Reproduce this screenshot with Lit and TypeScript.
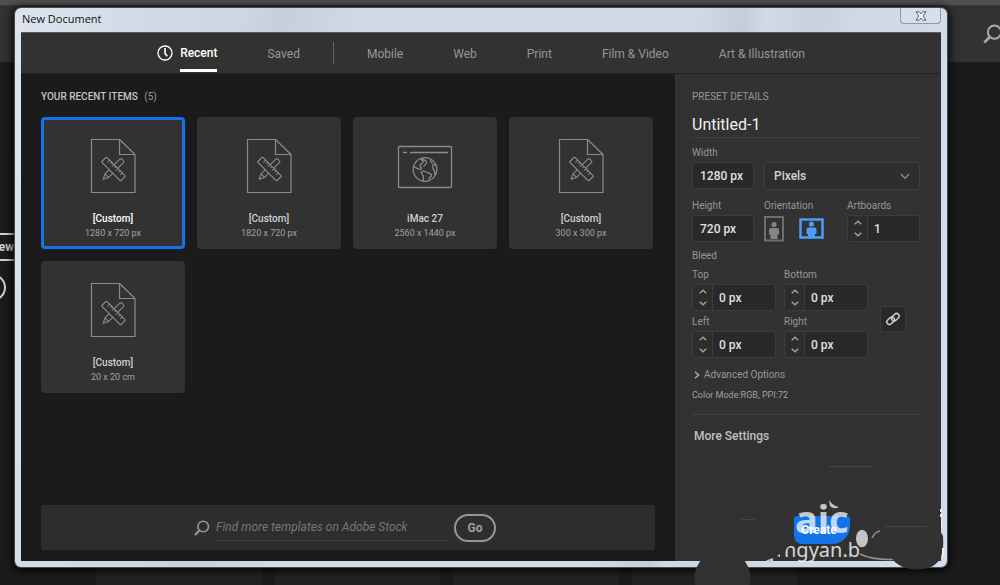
import { LitElement, html, css, svg } from "lit";
import { customElement, property, state } from "lit/decorators.js";

interface Preset {
  name: string;
  size: string;
  kind: "custom" | "web";
}

const PRESETS: Preset[] = [
  { name: "[Custom]", size: "1280 x 720 px", kind: "custom" },
  { name: "[Custom]", size: "1820 x 720 px", kind: "custom" },
  { name: "iMac 27", size: "2560 x 1440 px", kind: "web" },
  { name: "[Custom]", size: "300 x 300 px", kind: "custom" },
  { name: "[Custom]", size: "20 x 20 cm", kind: "custom" },
];

const magnifier = html`<svg width="16" height="16" viewBox="0 0 16 16" fill="none" stroke="currentColor" aria-hidden="true">
  <circle cx="9.2" cy="6.5" r="5.3" stroke-width="1.6"></circle>
  <path d="M5.3 10.4 1 14.9" stroke-width="2.2"></path>
</svg>`;

const documentIcon = html`<svg width="46" height="56" viewBox="0 0 46 56" fill="none" stroke="currentColor" stroke-width="1.2" stroke-linejoin="round" aria-hidden="true">
  <path d="M1.500 1.500H29.500L45 16.500V54.500H1.500Z M29.500 1.500V16.500H45"></path>
  <g transform="translate(23.500 31) rotate(45)">
    <path d="M-2.500 9.500V-11.500q0-1.500 1.500-1.500h2q1.500 0 1.500 1.500V9.500L0 14.500Z M-2.500 9.500h5" stroke-width="1.100"></path>
  </g>
  <g transform="translate(23.500 31) rotate(-45)">
    <rect x="-3.500" y="-13.500" width="7" height="27" rx="1" fill="#323232" stroke-width="1.200"></rect>
    <path d="M3.500-9H.5M3.500-6H1.500M3.500-3H.5M3.500 0H1.500M3.500 3H.5M3.500 6H1.500M3.500 9H.5" stroke-width="1"></path>
  </g>
</svg>`;

const browserIcon = html`<svg width="56" height="56" viewBox="0 0 56 56" fill="none" stroke="currentColor" stroke-width="1.300" stroke-linejoin="round" aria-hidden="true">
  <rect x="1.500" y="8.500" width="53" height="41" rx="1"></rect>
  <path d="M6 14.500h4M13 14.500h38"></path>
  <circle cx="28" cy="31.500" r="11.800"></circle>
  <path d="M24 20.800c0 2 2.500 1.200 2.200 3.200-.3 1.800-3 1.500-3.200 3.500-.2 1.500 2 1.500 1.500 3-.5 1.200-2.500.8-3.500.2-1.500-.8-2.800-1.200-4-2M24 20.800c2.500 1 4.500.8 5.500 3.200.5 1.800-1.500 3-3 4.500M39.500 27.500c-2-1.500-3.500-1-3.800 1-.3 2.500.8 3 1.800 4.500.6 1 .2 2.500 0 4M33.500 21.500c-.5 2 1 3 2.200 4.500M24.500 33.500c2-.8 4-.2 5.500 1 1.500 1 4.800.8 4.500 3-.3 1.500-2.500 2-3 4M24.500 33.500c-1 2 1.200 3 1.800 4.500.5 1.500-.5 3 .2 5"></path>
</svg>`;

const person = svg`<circle r="2.600" cy="-6"></circle><path d="M-5-.5Q-5-2.500-3-2.500H3Q5-2.500 5-.5V4H3.500V8.500H-3.500V4H-5Z"></path>`;

@customElement("number-stepper")
class NumberStepper extends LitElement {
  @property() label = "";
  @property() value = "";

  static styles = css`
    :host { display: block; min-width: 0; }
    label { display: block; font-size: 10px; line-height: 12px; color: #969696; margin-bottom: 3px; }
    .box { display: flex; height: 27px; box-sizing: border-box; border: 1px solid #3c3c3c; border-radius: 3px; background: #292929; overflow: hidden; }
    .arrows { flex: 0 0 19px; display: grid; grid-template-rows: 1fr 1fr; border-right: 1px solid #3c3c3c; background: #2d2d2d; }
    button { border: 0; padding: 0; background: none; color: #a0a0a0; display: grid; place-items: center; }
    input { flex: 1; min-width: 0; width: 0; border: 0; outline: 0; padding: 0 6px; background: none; color: #e0e0e0; font: 500 12px Roboto, sans-serif; }
  `;

  render() {
    return html`
      <label for="field">${this.label}</label>
      <div class="box">
        <div class="arrows">
          <button aria-label="Increase ${this.label}"><svg width="8" height="5" viewBox="0 0 8 5" fill="none" stroke="currentColor" stroke-width="1.400"><path d="M.7 4.300 4 1.200 7.300 4.300"></path></svg></button>
          <button aria-label="Decrease ${this.label}"><svg width="8" height="5" viewBox="0 0 8 5" fill="none" stroke="currentColor" stroke-width="1.400"><path d="M.7.7 4 3.800 7.300.7"></path></svg></button>
        </div>
        <input id="field" .value=${this.value} />
      </div>
    `;
  }
}

@customElement("preset-card")
class PresetCard extends LitElement {
  @property({ attribute: false }) preset!: Preset;
  @property({ type: Boolean }) selected = false;

  static styles = css`
    :host { display: block; }
    button { width: 100%; height: 132px; box-sizing: border-box; padding: 18px 0 0; border: 3px solid #323232; border-radius: 4px; background: #323232; font-family: Roboto, sans-serif; color: #8c8c8c; display: flex; flex-direction: column; align-items: center; }
    .selected { border-color: #1473e6; }
    .name { margin-top: 18px; font-size: 10px; line-height: 14px; font-weight: 500; color: #d0d0d0; }
    .selected .name { color: #fff; }
    .size { font-size: 9px; line-height: 14px; color: #a0a0a0; }
  `;

  render() {
    return html`<button class=${this.selected ? "selected" : ""} aria-pressed=${this.selected}>
      ${this.preset.kind === "web" ? browserIcon : documentIcon}
      <span class="name">${this.preset.name}</span>
      <span class="size">${this.preset.size}</span>
    </button>`;
  }
}

@customElement("app-root")
class AppRoot extends LitElement {
  @state() private selected = 0;

  static styles = css`
    :host { display: grid; min-height: 100vh; position: relative; overflow: hidden; background: #1b1b1b; font-family: Roboto, "Noto Sans", sans-serif; color: #969696; }
    * { box-sizing: border-box; }
    button, input, select { font-family: inherit; }
    svg { display: block; flex: none; }
    h1, h2, h3, p { margin: 0; font-weight: 400; }

    .workspace, .dialog { grid-area: 1 / 1; min-width: 0; }
    .workspace { display: flex; flex-direction: column; }
    .strip { height: 6px; background: #505050; border-bottom: 1px solid #383838; }
    .appbar { height: 56px; background: #323232; display: flex; justify-content: flex-end; align-items: center; color: #a8a8a8; }
    .appbar svg { width: 20px; height: 20px; margin-right: -3px; }
    .side { flex: 1; padding-top: 171px; display: flex; flex-direction: column; align-items: flex-start; gap: 13px; }
    .new { height: 28px; width: 40px; margin-left: -24px; padding: 0; border: 2px solid #d0d0d0; background: none; color: #d0d0d0; font-size: 12px; font-weight: 700; text-align: right; }
    .round { width: 27px; height: 27px; margin-left: -21px; padding: 0; border: 2px solid #d0d0d0; border-radius: 50%; background: none; }
    .thumbs { height: 20px; padding: 0 203px 0 96px; display: grid; grid-template-columns: repeat(4, 1fr); gap: 13px; }
    .thumbs span { background: #212121; }

    .dialog { margin: 8px 53px 18px 15px; display: flex; flex-direction: column; padding: 0 6px 6px; border-radius: 6px; background: linear-gradient(100deg, #dde4ee 0, #cfdae6 14%, #ccd7e3 22%, #c5d0dc 26%, #cfdae6 34%, #cfdae6 66%, #c3ced9 71%, #d0dbe7 73%, #c6d1dc 78%, #cfdae6 82%, #d3dceb 100%); box-shadow: 0 0 0 1px #454a50, 0 1px 8px 2px #000; }
    .titlebar { height: 24px; display: flex; align-items: flex-start; justify-content: space-between; }
    .titlebar h1 { padding-left: 1px; font: 11px/22px "Open Sans", sans-serif; color: #111; }
    .close { width: 41px; height: 16px; padding: 0; border: 1px solid #8f99a6; border-top: 0; border-radius: 0 0 4px 4px; background: #d5deea; display: grid; place-items: center; }
    .content { flex: 1; display: flex; flex-direction: column; background: #1b1b1b; border-top: 1px solid #585c60; }

    .tabs { height: 41px; background: #323232; border-bottom: 1px solid #232323; display: flex; justify-content: center; align-items: stretch; gap: 50px; }
    .tabs a { display: flex; align-items: center; padding-top: 1px; color: #969696; text-decoration: none; font-size: 12px; line-height: 16px; white-space: nowrap; }
    .tabs .current { gap: 7px; padding: 0 0 1px; color: #fff; font-weight: 500; }
    .current span { align-self: stretch; display: flex; align-items: center; border-bottom: 3px solid #fff; border-top: 4px solid transparent; }
    .rule { width: 1px; height: 22px; margin: 0 -17px; align-self: center; background: #606060; }

    .body { flex: 1; display: flex; }
    .items { flex: 1; min-width: 0; padding: 16px 20px 11px; display: flex; flex-direction: column; }
    .items h2 { font-size: 10px; line-height: 14px; font-weight: 500; color: #c4c4c4; }
    .items h2 span { margin-left: 4px; font-weight: 400; color: #969696; }
    .grid { margin-top: 13px; display: grid; grid-template-columns: repeat(auto-fill, 144px); gap: 12px; }
    .stock { margin-top: auto; height: 45px; padding-right: 6px; border-radius: 3px; background: #2e2e2e; display: flex; align-items: center; justify-content: center; gap: 6px; color: #969696; }
    .stock input { width: 232px; height: 27px; padding: 0; border: 0; border-bottom: 1px solid #3e3e3e; outline: 0; background: none; font-size: 12px; font-style: italic; color: #ccc; }
    .stock input::placeholder { color: #767676; opacity: 1; }
    .go { width: 42px; height: 28px; padding: 0; border: 2px solid #969696; border-radius: 14px; background: none; color: #a0a0a0; font-size: 12px; font-weight: 700; }

    .details { flex: 0 0 266px; padding: 16px 21px 17px 17px; background: #323232; display: flex; flex-direction: column; font-size: 10px; line-height: 12px; }
    .details h2 { font-size: 10px; line-height: 14px; }
    .title { width: 100%; height: 24px; margin-top: 10px; padding: 0 0 3px; border: 0; border-bottom: 1px solid #3e3e3e; outline: 0; background: none; color: #f0f0f0; font-size: 16px; }
    .row { display: flex; gap: 10px; margin-top: 10px; }
    .title + .row { margin-top: 9px; }
    .field { display: flex; flex-direction: column; gap: 3px; }
    .short { flex: 0 0 62px; }
    .field input { width: 100%; height: 27px; padding: 0 7px; border: 1px solid #3c3c3c; border-radius: 3px; outline: 0; background: #292929; color: #e0e0e0; font-size: 12px; font-weight: 500; }
    .units { flex: 1; }
    .select { display: grid; align-items: center; }
    .select > * { grid-area: 1 / 1; }
    .select svg { justify-self: end; margin-right: 10px; pointer-events: none; }
    select { appearance: none; width: 100%; height: 28px; padding: 0 9px; border: 1px solid #3e3e3e; border-radius: 3px; background: #2e2e2e; color: #d4d4d4; font-size: 12px; font-weight: 500; }
    .orient { flex: 1; }
    .orient div { height: 27px; display: flex; align-items: center; gap: 15px; }
    .orient button, .link { padding: 0; border: 0; background: none; }
    .artboards { flex: 0 0 73px; }
    .bleed-title { margin-top: 8px; }
    .bleed { margin-top: 7px; display: flex; align-items: center; gap: 12px; }
    .sides { display: grid; grid-template-columns: 84px 84px; gap: 5px 8px; }
    .link { width: 26px; height: 26px; margin-top: 10px; border: 1px solid #3a3a3a; border-radius: 3px; background: #292929; display: grid; place-items: center; }
    .advanced { margin-top: 10px; padding: 0; border: 0; background: none; display: flex; align-items: center; gap: 4px; color: #969696; font-size: 10px; line-height: 14px; }
    .advanced svg { margin-left: 2px; }
    .mode { margin-top: 7px; font-size: 9px; color: #a0a0a0; }
    hr { width: 100%; margin: 13px 0 14px; border: 0; border-top: 1px solid #414141; }
    .more { align-self: flex-start; padding: 0 2px; border: 0; background: none; color: #c0c0c0; font-size: 12px; line-height: 14px; font-weight: 500; }
    .create { width: 56px; height: 28px; margin: auto 0 0 102px; padding: 0 6px 0 0; border: 0; border-radius: 3px 3px 18px 8px; background: #1473e6; color: #fff; font-size: 12px; font-weight: 700; }
    .stamp { position: absolute; right: 40px; bottom: 0; pointer-events: none; }
    .stamp text { font-family: "Noto Sans", sans-serif; fill: #fff; }
  `;

  render() {
    return html`
      <div class="workspace">
        <div class="strip"></div>
        <div class="appbar">${magnifier}</div>
        <div class="side">
          <button class="new">New</button>
          <button class="round" aria-label="Help"></button>
        </div>
        <div class="thumbs"><span></span><span></span><span></span><span></span></div>
      </div>

      <section class="dialog" role="dialog" aria-labelledby="heading">
        <header class="titlebar">
          <h1 id="heading">New Document</h1>
          <button class="close" aria-label="Close">
            <svg width="12" height="10" viewBox="0 0 12 10"><path d="M1 .8H4.200L6 2.900 7.800.8H11L8 5l3 4.200H7.800L6 7.100 4.200 9.200H1L4 5Z" fill="#f4f6f9" stroke="#555b66"></path></svg>
          </button>
        </header>
        <div class="content">
          <nav class="tabs">
            <a class="current" href="#recent">
              <svg width="16" height="16" viewBox="0 0 16 16" fill="none" stroke="currentColor"><circle cx="8" cy="8" r="7" stroke-width="1.300"></circle><path d="M8 3V8.500L10.300 11.300" stroke-width="1.600"></path></svg>
              <span>Recent</span>
            </a>
            <a href="#saved">Saved</a>
            <div class="rule"></div>
            ${["Mobile", "Web", "Print", "Film & Video", "Art & Illustration"].map((t) => html`<a href="#category">${t}</a>`)}
          </nav>
          <div class="body">
            <main class="items">
              <h2>YOUR RECENT ITEMS <span>(5)</span></h2>
              <div class="grid">
                ${PRESETS.map((p, i) => html`<preset-card .preset=${p} ?selected=${i === this.selected} @click=${() => (this.selected = i)}></preset-card>`)}
              </div>
              <div class="stock">
                ${magnifier}
                <input aria-label="Search templates" placeholder="Find more templates on Adobe Stock" />
                <button class="go">Go</button>
              </div>
            </main>
            <aside class="details">
              <h2>PRESET DETAILS</h2>
              <input class="title" aria-label="Document name" value="Untitled-1" />
              <div class="row">
                <div class="field short"><label for="width">Width</label><input id="width" value="1280 px" /></div>
                <div class="field units">
                  <label for="units">&nbsp;</label>
                  <div class="select">
                    <select id="units" aria-label="Units"><option>Pixels</option></select>
                    <svg width="10" height="7" viewBox="0 0 10 7" fill="none" stroke="#8c8c8c" stroke-width="1.400"><path d="M1 1 5 5.300 9 1"></path></svg>
                  </div>
                </div>
              </div>
              <div class="row">
                <div class="field short"><label for="height">Height</label><input id="height" value="720 px" /></div>
                <div class="field orient">
                  <span>Orientation</span>
                  <div>
                    <button aria-label="Portrait"><svg width="20" height="26" viewBox="0 0 20 26"><rect x="1" y="1" width="18" height="23.500" fill="none" stroke="#6e6e6e" stroke-width="2"></rect><g transform="translate(10 14.500)" fill="#858585">${person}</g></svg></button>
                    <button aria-label="Landscape"><svg width="25" height="22" viewBox="0 0 25 22"><rect x="1.500" y="1.500" width="22" height="18" fill="none" stroke="#4b9df8" stroke-width="2.500"></rect><g transform="translate(12.500 12)" fill="#4b9df8">${person}</g></svg></button>
                  </div>
                </div>
                <number-stepper class="artboards" label="Artboards" value="1"></number-stepper>
              </div>
              <p class="bleed-title">Bleed</p>
              <div class="bleed">
                <div class="sides">
                  ${["Top", "Bottom", "Left", "Right"].map((s) => html`<number-stepper label=${s} value="0 px"></number-stepper>`)}
                </div>
                <button class="link" aria-label="Link bleed values">
                  <svg width="16" height="16" viewBox="0 0 16 16" fill="none" stroke="#d0d0d0" stroke-width="1.500"><rect x="-4.200" y="-2.600" width="8.400" height="5.200" rx="2.600" transform="translate(5.600 9.800) rotate(-42)"></rect><rect x="-4.200" y="-2.600" width="8.400" height="5.200" rx="2.600" transform="translate(10.400 6.200) rotate(-42)"></rect></svg>
                </button>
              </div>
              <button class="advanced"><svg width="6" height="8" viewBox="0 0 6 8" fill="none" stroke="#b0b0b0" stroke-width="1.500"><path d="M1 .8 4.600 4 1 7.200"></path></svg>Advanced Options</button>
              <p class="mode">Color Mode:RGB, PPI:72</p>
              <hr />
              <button class="more">More Settings</button>
              <button class="create">Create</button>
            </aside>
          </div>
        </div>
      </section>

      <svg class="stamp" width="270" height="125" viewBox="690 460 270 125" aria-hidden="true">
        <path d="M829 466.500H873M741 519.500H755M885 526.500H927" stroke="#454545"></path>
        <text x="795" y="533" font-size="38" font-weight="700" opacity=".72">aic</text>
        <path d="M829 500Q833 506 839 507Q834 510 830 506Z" fill="#c4c4c4"></path>
        <text x="784" y="557" font-size="20" opacity=".8">ngyan.b</text>
        <path d="M766 560.500 773 558V561Q770 563 766 560.500ZM777 556 780 554V557Z" fill="#c4c4c4"></path>
        <path d="M780 540H792L784 553 780 557Z" fill="#323232"></path>
        <path d="M850 500H862V536H852Q845 545 850 533Z" fill="#323232"></path>
        <ellipse cx="862" cy="538.500" rx="6" ry="8.800" fill="#c4c4c4"></ellipse>
        <path d="M860 554Q872 560 893 559.500" fill="none" stroke="#929292" stroke-width="1.500"></path>
        <path d="M872 538Q875 532 880 531" fill="none" stroke="#8c8c8c" stroke-width="1.500"></path>
        <path d="M887 550Q895 569 915 569.500T941 557Q944 548 943 536L938 527H887Z" fill="#323232"></path>
        <path d="M940 509h2v3h-2ZM940 514h2v3h-2ZM941 519h1.500v8h-1.500ZM942 548h2.500v8h-2.500Z" fill="#eee"></path>
        <circle cx="722.500" cy="578" r="28" fill="#323232"></circle>
      </svg>
    `;
  }
}
